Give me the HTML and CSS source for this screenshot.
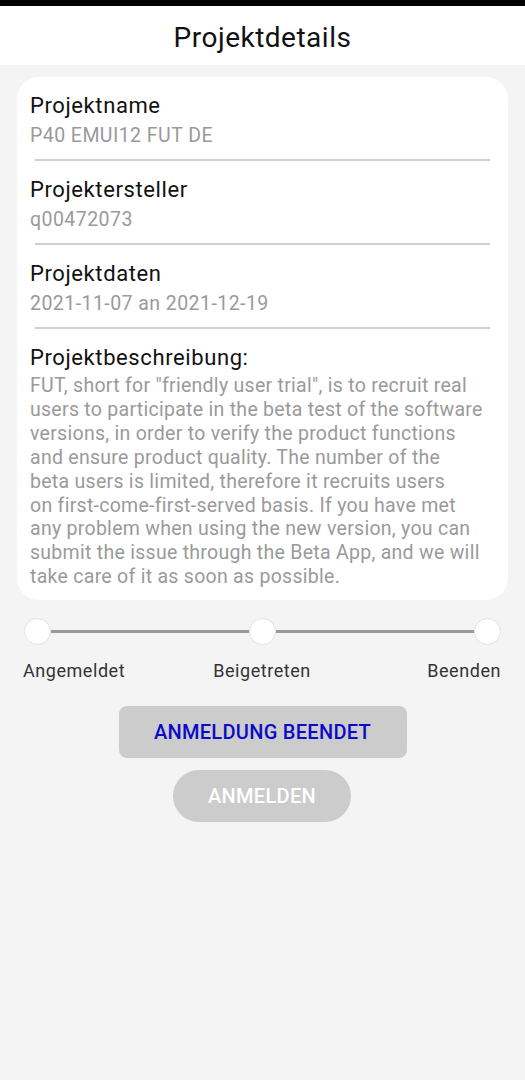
FILE: index.html
```html
<!DOCTYPE html>
<html lang="de">
<head>
<meta charset="utf-8">
<link rel="stylesheet" href="styles.css">
</head>
<body>
<div class="statusbar"></div>
<header class="header">Projektdetails</header>
<main class="content">
  <section class="card">
    <div class="row">
      <div class="label">Projektname</div>
      <div class="value">P40 EMUI12 FUT DE</div>
    </div>
    <div class="divider"></div>
    <div class="row">
      <div class="label">Projektersteller</div>
      <div class="value">q00472073</div>
    </div>
    <div class="divider"></div>
    <div class="row">
      <div class="label">Projektdaten</div>
      <div class="value">2021-11-07 an 2021-12-19</div>
    </div>
    <div class="divider"></div>
    <div class="row desc-row">
      <div class="label">Projektbeschreibung:</div>
      <div class="desc">FUT, short for "friendly user trial", is to recruit real<br>users to participate in the beta test of the software<br>versions, in order to verify the product functions<br>and ensure product quality. The number of the<br>beta users is limited, therefore it recruits users<br>on first-come-first-served basis. If you have met<br>any problem when using the new version, you can<br>submit the issue through the Beta App, and we will<br>take care of it as soon as possible.</div>
    </div>
  </section>

  <section class="stepper">
    <div class="track">
      <span class="dot"></span>
      <span class="line"></span>
      <span class="dot"></span>
      <span class="line"></span>
      <span class="dot"></span>
    </div>
    <div class="step-labels">
      <span class="step-start">Angemeldet</span>
      <span class="step-mid">Beigetreten</span>
      <span class="step-end">Beenden</span>
    </div>
  </section>

  <div class="actions">
    <button class="btn btn-status">ANMELDUNG BEENDET</button>
    <button class="btn btn-join">ANMELDEN</button>
  </div>
</main>
</body>
</html>
```

FILE: styles.css
```css
* { box-sizing: border-box; }
html, body {
  margin: 0;
  padding: 0;
  background: #f4f4f4;
  font-family: Roboto, "Noto Sans", Arial, sans-serif;
}
body {
  width: 525px;
  min-height: 1080px;
}
.statusbar {
  height: 6px;
  background: #000;
}
.header {
  height: 59px;
  background: #fff;
  display: flex;
  align-items: center;
  justify-content: center;
  font-size: 28px;
  letter-spacing: 0.5px;
  color: #111;
  padding-top: 3px;
}
.content {
  padding: 12px 17px 0 17px;
}
.card {
  background: #fff;
  border-radius: 22px;
  padding: 15px 13px 11px 13px;
}
.label {
  font-size: 22px;
  letter-spacing: 0.6px;
  color: #111;
  line-height: 28px;
}
.value {
  font-size: 19.5px;
  letter-spacing: 0.45px;
  color: #9a9a9a;
  line-height: 28px;
  padding-top: 2px;
  margin-bottom: 9px;
}
.divider {
  height: 1.5px;
  background: #cfcfcf;
  margin: 0 5px 0 5px;
}
.divider + .row {
  padding-top: 15.5px;
}
.desc {
  font-size: 19.5px;
  letter-spacing: 0.28px;
  line-height: 23.9px;
  color: #9a9a9a;
  margin-top: 2px;
}
.stepper {
  margin-top: 18px;
}
.track {
  display: flex;
  align-items: center;
  padding: 0 7px 0 7px;
}
.dot {
  width: 27px;
  height: 27px;
  border-radius: 50%;
  background: #fff;
  border: 1px solid #e2e2e2;
  flex: none;
}
.line {
  flex: 1;
  height: 3px;
  background: #999;
}
.step-labels {
  display: grid;
  grid-template-columns: 1fr 1fr 1fr;
  font-size: 18px;
  letter-spacing: 0.55px;
  color: #333;
  margin-top: 15px;
  padding: 0 7px 0 6px;
}
.step-start { justify-self: start; }
.step-mid { justify-self: center; }
.step-end { justify-self: end; }
.actions {
  display: flex;
  flex-direction: column;
  align-items: center;
  gap: 12px;
  margin-top: 25px;
}
.btn {
  border: none;
  background: #cccccc;
  font-family: Roboto, "Noto Sans", Arial, sans-serif;
  font-weight: 500;
  font-size: 20px;
  letter-spacing: 0.3px;
  height: 52px;
  padding: 0;
}
.btn-status {
  width: 288px;
  border-radius: 8px;
  color: #0a0ac8;
}
.btn-join {
  width: 178px;
  border-radius: 26px;
  color: #fff;
  margin-left: -1px;
}
```
